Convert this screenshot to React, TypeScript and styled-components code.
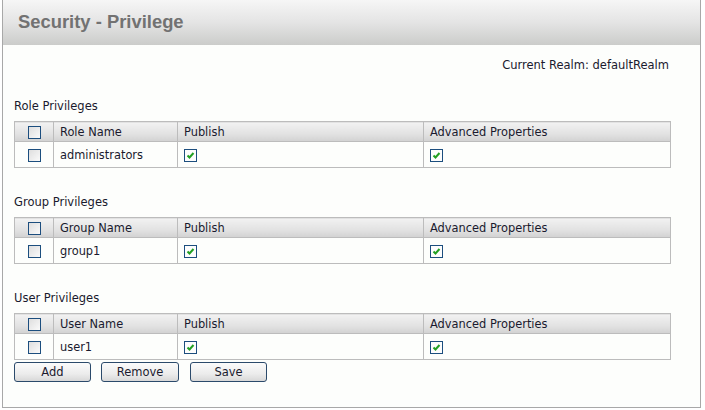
import React from "react";
import styled, { createGlobalStyle } from "styled-components";

const GlobalStyle = createGlobalStyle`
  html, body {
    margin: 0;
    padding: 0;
    background: #ffffff;
  }
  body {
    font-family: "DejaVu Sans", Verdana, sans-serif;
  }
`;

const Panel = styled.div`
  margin-left: 2px;
  width: 699px;
  height: 408px;
  box-sizing: border-box;
  border: 1px solid #a8a8a8;
  border-top: none;
  background: #fdfefc;
`;

const Header = styled.div`
  height: 45px;
  display: flex;
  align-items: center;
  padding-left: 15px;
  background: linear-gradient(#f6f6f6, #e4e4e4 50%, #cbccca);
`;

const Title = styled.h1`
  margin: 0;
  padding-bottom: 2px;
  font-family: "Liberation Sans", Arial, sans-serif;
  font-size: 18.4px;
  font-weight: bold;
  color: #727272;
`;

const Body = styled.div`
  padding: 0 31px 0 11px;
`;

const Realm = styled.div`
  margin-top: 12px;
  height: 16px;
  line-height: 16px;
  text-align: right;
  font-size: 11.5px;
  color: #1a1a2e;
`;

const Section = styled.section<{ gap: number }>`
  margin-top: ${p => p.gap}px;
`;

const Label = styled.div`
  height: 16px;
  line-height: 16px;
  padding-top: 2px;
  margin-bottom: 7px;
  font-size: 11.5px;
  color: #1a1a2e;
`;

const Table = styled.table`
  width: 657px;
  border-collapse: collapse;
  font-size: 11.4px;
  color: #1a1a2e;
`;

const Th = styled.th<{ w?: number; center?: boolean }>`
  height: 18px;
  padding: 1px 0 0 6px;
  ${p => (p.w ? `width: ${p.w}px;` : "")}
  text-align: ${p => (p.center ? "center" : "left")};
  font-weight: normal;
  border: 1px solid #bcbcbc;
  border-left-color: #f4f4f4;
  background: linear-gradient(#f2f2f2, #e2e2e2 60%, #d2d2d2);
  &:first-child {
    border-left-color: #bcbcbc;
    padding: 0;
    height: 19px;
  }
`;

const Td = styled.td<{ center?: boolean }>`
  height: 24px;
  padding: 1px 0 0 6px;
  text-align: ${p => (p.center ? "center" : "left")};
  border: 1px solid #bcbcbc;
  &:first-child {
    padding: 0;
    height: 25px;
  }
`;

const Box = styled.span`
  display: inline-block;
  width: 11px;
  height: 11px;
  border: 1px solid #1c4e7e;
  background: linear-gradient(135deg, #dedede, #fafafa);
  vertical-align: middle;
  position: relative;
`;

const Checked = styled(Box)`
  background: #fdfdfd;
  svg {
    position: absolute;
    left: 1px;
    top: 1px;
  }
`;

const Check = () => (
  <svg width="9" height="9" viewBox="0 0 9 9">
    <path d="M1.5 4.5 L3.5 6.5 L7.5 2" fill="none" stroke="#22a022" strokeWidth="2" />
  </svg>
);

const CheckBox: React.FC<{ checked?: boolean }> = ({ checked }) =>
  checked ? (
    <Checked>
      <Check />
    </Checked>
  ) : (
    <Box />
  );

const Buttons = styled.div`
  display: flex;
  margin-top: 2px;
`;

const Button = styled.button<{ w: number; ml: number }>`
  width: ${p => p.w}px;
  height: 20px;
  margin-left: ${p => p.ml}px;
  padding: 0;
  font-family: "DejaVu Sans", Verdana, sans-serif;
  font-size: 11.5px;
  color: #1a1a2e;
  border: 1px solid #2b4a6b;
  border-radius: 3px;
  background: linear-gradient(#fbfbfb, #ececec 60%, #d8d8d8);
`;

interface Privilege {
  label: string;
  column: string;
  name: string;
  gap: number;
}

const sections: Privilege[] = [
  { label: "Role Privileges", column: "Role Name", name: "administrators", gap: 23 },
  { label: "Group Privileges", column: "Group Name", name: "group1", gap: 24 },
  { label: "User Privileges", column: "User Name", name: "user1", gap: 24 }
];

const App: React.FC = () => (
  <>
    <GlobalStyle />
    <Panel>
      <Header>
        <Title>Security - Privilege</Title>
      </Header>
      <Body>
        <Realm>Current Realm: defaultRealm</Realm>
        {sections.map(s => (
          <Section key={s.label} gap={s.gap}>
            <Label>{s.label}</Label>
            <Table>
              <thead>
                <tr>
                  <Th w={38} center>
                    <CheckBox />
                  </Th>
                  <Th w={117}>{s.column}</Th>
                  <Th w={239}>Publish</Th>
                  <Th>Advanced Properties</Th>
                </tr>
              </thead>
              <tbody>
                <tr>
                  <Td center>
                    <CheckBox />
                  </Td>
                  <Td>{s.name}</Td>
                  <Td>
                    <CheckBox checked />
                  </Td>
                  <Td>
                    <CheckBox checked />
                  </Td>
                </tr>
              </tbody>
            </Table>
          </Section>
        ))}
        <Buttons>
          <Button w={77} ml={0}>Add</Button>
          <Button w={78} ml={10}>Remove</Button>
          <Button w={77} ml={11}>Save</Button>
        </Buttons>
      </Body>
    </Panel>
  </>
);

export default App;
